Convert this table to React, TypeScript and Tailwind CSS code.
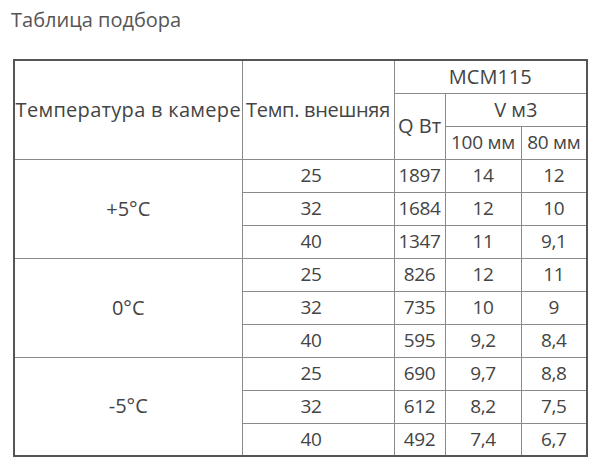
const rows = [
  { t: "+5°C", data: [["25", "1897", "14", "12"], ["32", "1684", "12", "10"], ["40", "1347", "11", "9,1"]] },
  { t: "0°C", data: [["25", "826", "12", "11"], ["32", "735", "10", "9"], ["40", "595", "9,2", "8,4"]] },
  { t: "-5°C", data: [["25", "690", "9,7", "8,8"], ["32", "612", "8,2", "7,5"], ["40", "492", "7,4", "6,7"]] },
];

const td = "border border-[#8a8a8a] p-0 text-center h-[33px]";
const num = "text-[19px] tracking-[-0.4px]";

export default function App() {
  return (
    <div className="w-[600px] h-[465px] bg-white text-[#444] font-['Open_Sans',sans-serif] text-[20px] leading-none overflow-hidden">
      <div className="pl-[11px] pt-[8px] text-[#555] text-[20px] leading-[24px]">Таблица подбора</div>
      <table className="ml-[13px] mt-[27px] border-collapse border-2 border-[#555] table-fixed w-[573px]">
        <colgroup>
          <col className="w-[228px]" />
          <col className="w-[152px]" />
          <col className="w-[51px]" />
          <col className="w-[76px]" />
          <col className="w-[66px]" />
        </colgroup>
        <tbody>
          <tr>
            <td rowSpan={3} className={td + " whitespace-nowrap tracking-[0.3px]"}>Температура в камере</td>
            <td rowSpan={3} className={td + " whitespace-nowrap tracking-[-0.3px]"}>Темп. внешняя</td>
            <td colSpan={3} className={td}>МСМ115</td>
          </tr>
          <tr>
            <td rowSpan={2} className={td + " whitespace-nowrap"}>Q Вт</td>
            <td colSpan={2} className={td}>V м3</td>
          </tr>
          <tr>
            <td className={td + " whitespace-nowrap text-[19px] tracking-[-0.2px]"}>100 мм</td>
            <td className={td + " whitespace-nowrap text-[19px] tracking-[-0.3px]"}>80 мм</td>
          </tr>
          {rows.map((g) =>
            g.data.map((r, i) => (
              <tr key={g.t + i}>
                {i === 0 && (
                  <td rowSpan={3} className={td}>{g.t}</td>
                )}
                {r.map((c, j) => (
                  <td key={j} className={td + " " + num + (j === 0 ? " pr-[14px]" : "")}>{c}</td>
                ))}
              </tr>
            ))
          )}
        </tbody>
      </table>
    </div>
  );
}
